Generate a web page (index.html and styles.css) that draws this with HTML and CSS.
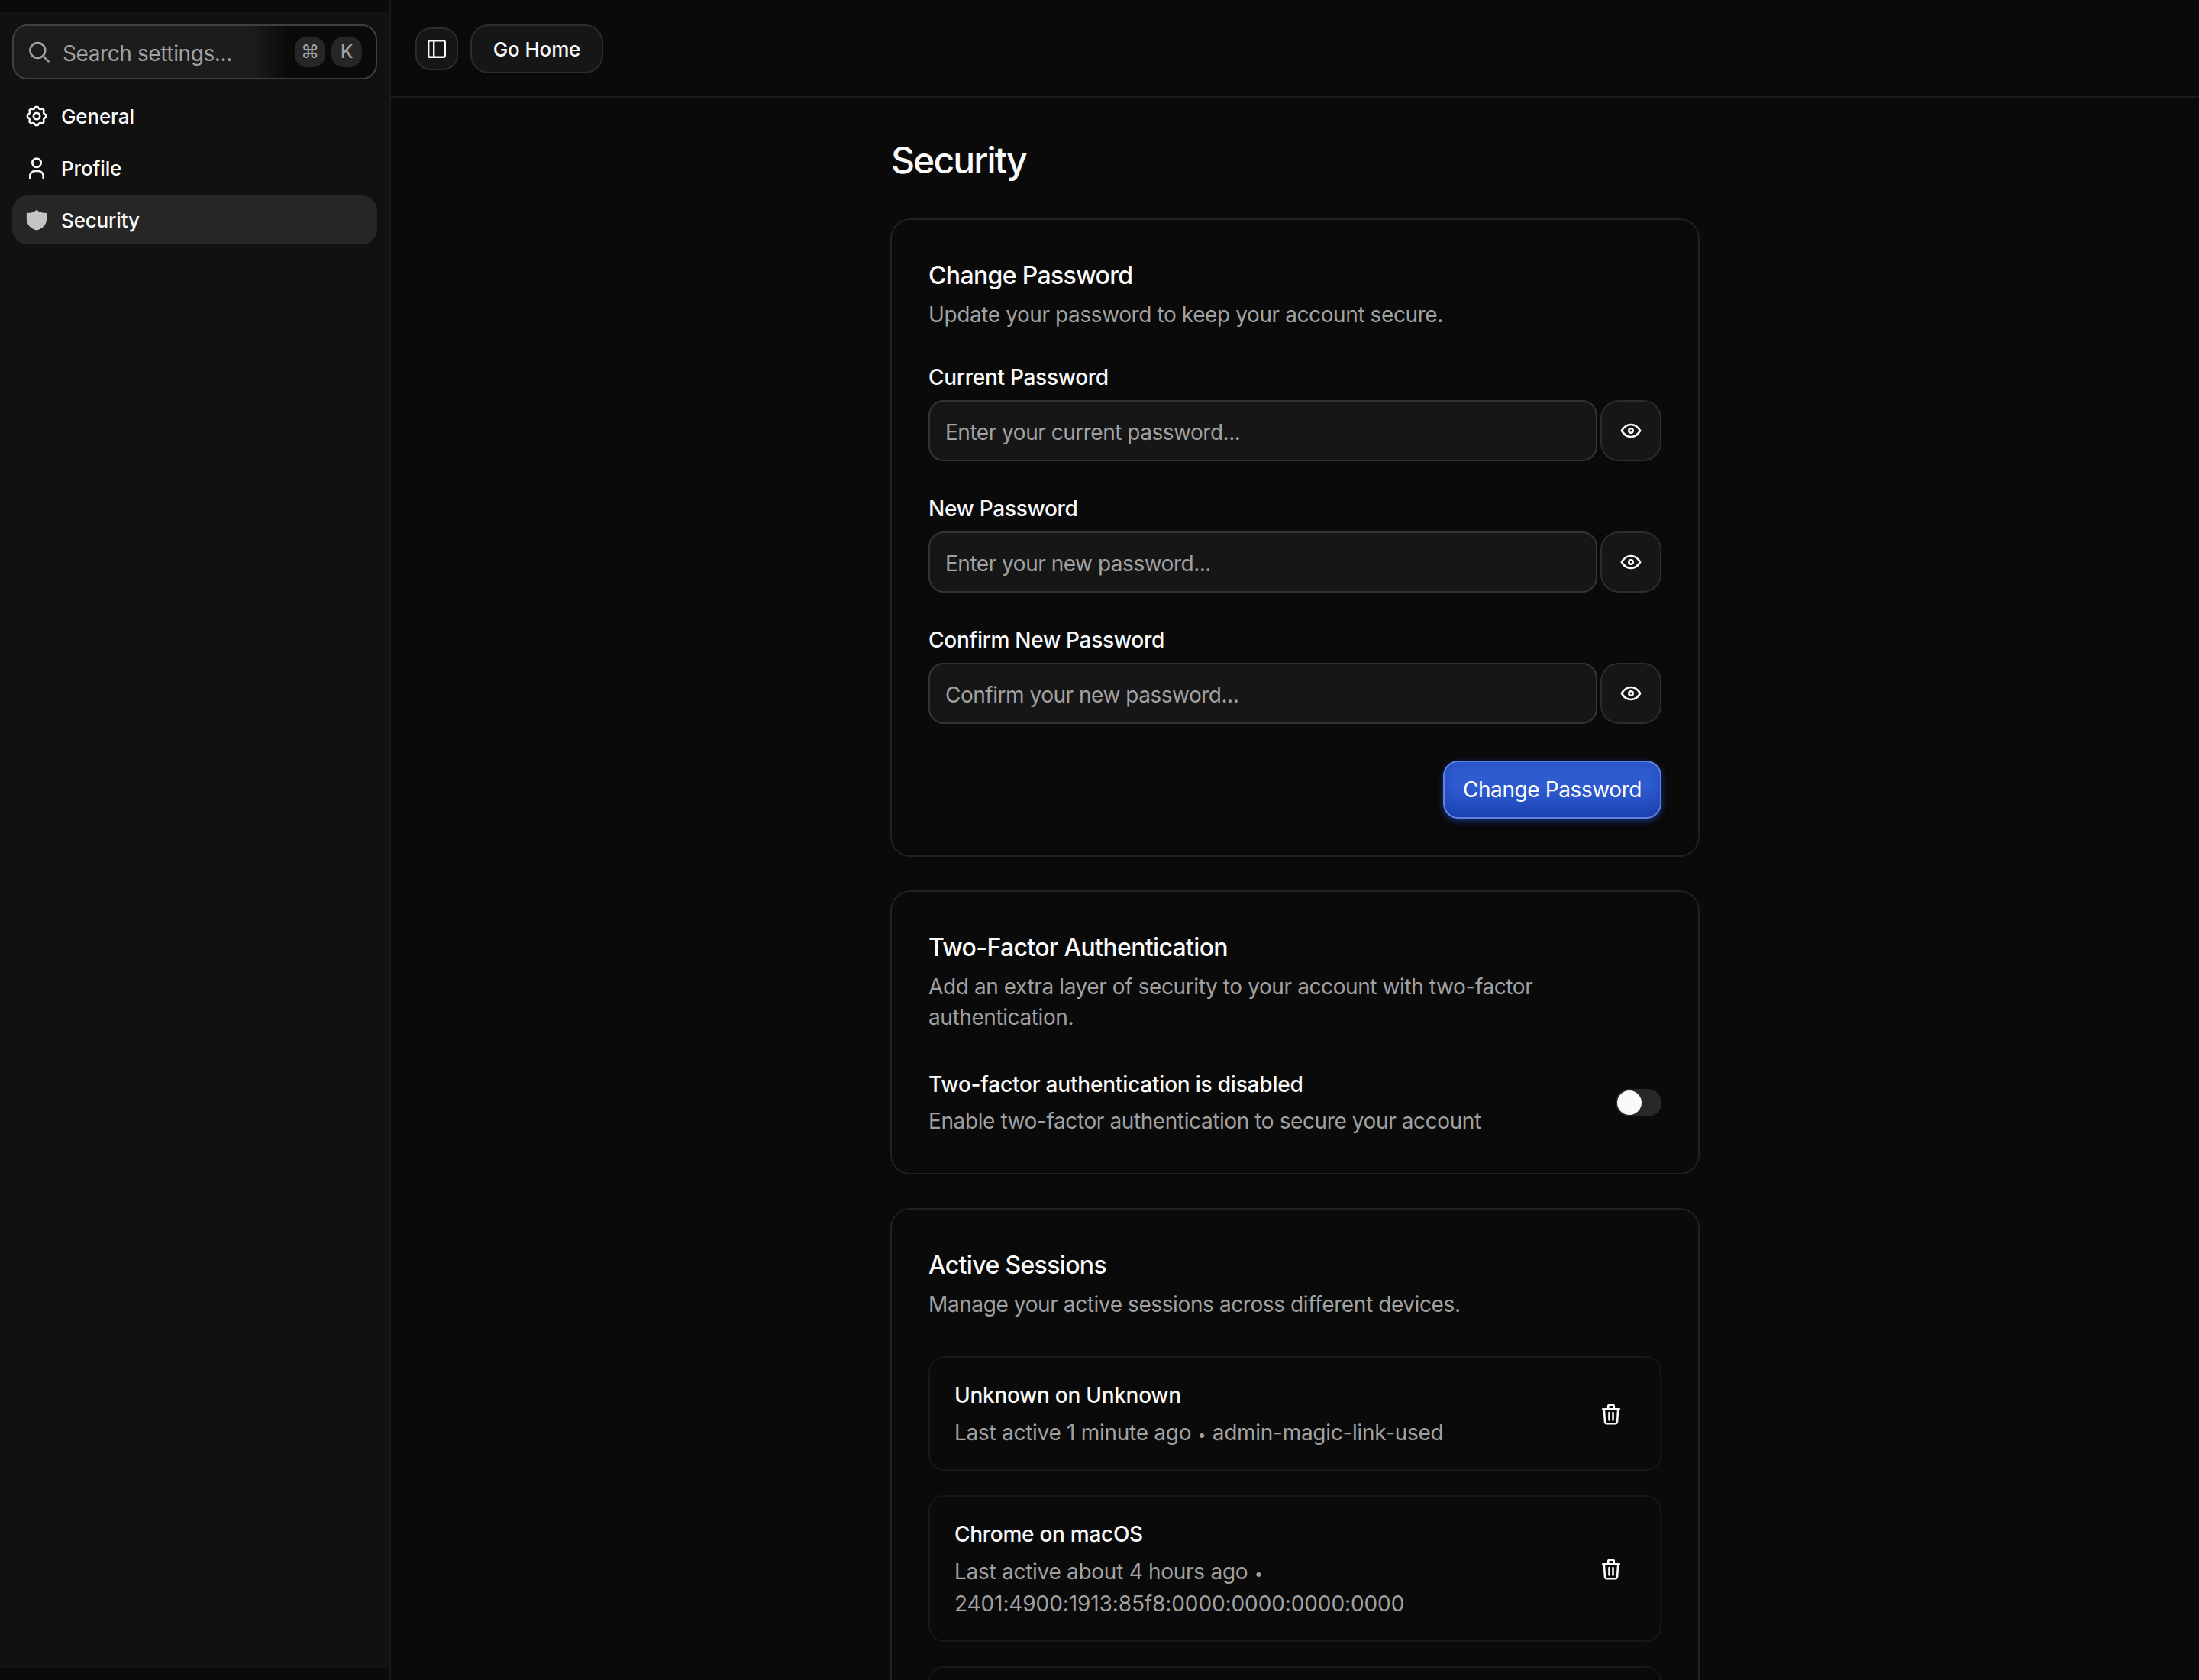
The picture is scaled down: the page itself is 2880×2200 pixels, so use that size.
FILE: index.html
```html
<!DOCTYPE html>
<html lang="en">
<head>
    <meta charset="UTF-8">
    <meta name="viewport" content="width=device-width, initial-scale=1.0">
    <title>Security</title>
    <link rel="stylesheet" href="styles.css">
</head>
<body>
    <!-- shared icons -->
    <svg class="sprite" aria-hidden="true">
        <symbol id="icon-eye" viewBox="0 0 28 28">
            <path d="M1.9 14C5 8.5 9.2 6 14 6s9 2.5 12.1 8C23 19.5 18.800 22 14 22S5 19.5 1.9 14Z"/>
            <circle cx="14" cy="14" r="2.7"/>
        </symbol>
        <symbol id="icon-trash" viewBox="0 0 24 28">
            <path d="M1.200 7.300h21.600M8.200 7V3.800a2 2 0 0 1 2-2h3.600a2 2 0 0 1 2 2V7M2.800 7.600 4 24a2.400 2.400 0 0 0 2.400 2.200h11.200A2.400 2.400 0 0 0 20 24l1.200-16.400M9.500 12v9.500M14.500 12v9.500"/>
        </symbol>
    </svg>

    <div class="layout">
        <aside class="sidebar">
            <div class="sidebar-inner">
                <div class="search">
                    <svg class="icon search-icon" viewBox="0 0 28 28"><circle cx="12.300" cy="12" r="9.900"/><path d="m19.500 19.300 7 7"/></svg>
                    <input type="text" placeholder="Search settings...">
                    <div class="shortcut">
                        <kbd>⌘</kbd>
                        <kbd>K</kbd>
                    </div>
                </div>
                <nav class="nav">
                    <a class="nav-item">
                        <svg class="icon" viewBox="-14 -14 28 28"><path d="M-1.670-11.880Q0-12.400 1.670-11.880 3.250-7.850 7.220-9.580 8.800-8.800 9.580-7.220 7.850-3.250 11.880-1.670 12.400 0 11.880 1.670 7.850 3.250 9.580 7.220 8.800 8.800 7.220 9.580 3.250 7.850 1.670 11.880 0 12.400-1.670 11.880-3.250 7.850-7.220 9.580-8.800 8.800-9.580 7.220-7.850 3.250-11.880 1.670-12.400 0-11.880-1.670-7.850-3.250-9.580-7.220-8.800-8.800-7.220-9.580-3.250-7.850-1.670-11.880Z"/><circle r="4.200"/></svg>
                        <span>General</span>
                    </a>
                    <a class="nav-item">
                        <svg class="icon" viewBox="0 0 28 28"><circle cx="14" cy="7.300" r="5.700"/><path d="M5.300 27.300V24.500A6.500 6.500 0 0 1 11.800 18h4.400a6.500 6.500 0 0 1 6.500 6.500v2.800"/></svg>
                        <span>Profile</span>
                    </a>
                    <a class="nav-item active">
                        <svg class="icon icon-solid" viewBox="0 0 28 28"><path d="M14 .7C10.500 3.800 6.500 4.800 2.300 4.800 1.300 4.800.8 5.400.8 6.400V12c0 8.500 5.700 13.800 13.200 15.400C21.500 25.800 27.200 20.500 27.200 12V6.400c0-1-.5-1.600-1.500-1.600C21.500 4.800 17.500 3.800 14 .7Z"/></svg>
                        <span>Security</span>
                    </a>
                </nav>
            </div>
        </aside>

        <div class="page">
            <header class="topbar">
                <button class="btn btn-toggle" aria-label="Toggle sidebar">
                    <svg class="icon-panel" viewBox="0 0 24 24"><rect x="1.200" y="1.200" width="21.600" height="21.600" rx="2.400"/><path d="M8.200 1.500v21"/></svg>
                </button>
                <button class="btn btn-home">Go Home</button>
            </header>

            <main class="content">
                <h1>Security</h1>

                <section class="card">
                    <div class="card-header">
                        <h2>Change Password</h2>
                        <p>Update your password to keep your account secure.</p>
                    </div>
                    <form class="form">
                        <div class="field">
                            <label for="currentPassword">Current Password</label>
                            <div class="field-row">
                                <input type="password" id="currentPassword" placeholder="Enter your current password...">
                                <button type="button" class="btn btn-eye" aria-label="Show password"><svg class="icon"><use href="#icon-eye"/></svg></button>
                            </div>
                        </div>
                        <div class="field">
                            <label for="newPassword">New Password</label>
                            <div class="field-row">
                                <input type="password" id="newPassword" placeholder="Enter your new password...">
                                <button type="button" class="btn btn-eye" aria-label="Show password"><svg class="icon"><use href="#icon-eye"/></svg></button>
                            </div>
                        </div>
                        <div class="field">
                            <label for="confirmPassword">Confirm New Password</label>
                            <div class="field-row">
                                <input type="password" id="confirmPassword" placeholder="Confirm your new password...">
                                <button type="button" class="btn btn-eye" aria-label="Show password"><svg class="icon"><use href="#icon-eye"/></svg></button>
                            </div>
                        </div>
                        <button type="submit" class="btn-primary">Change Password</button>
                    </form>
                </section>

                <section class="card">
                    <div class="card-header">
                        <h2>Two-Factor Authentication</h2>
                        <p>Add an extra layer of security to your account with two-factor<br>authentication.</p>
                    </div>
                    <div class="setting">
                        <div class="setting-text">
                            <h3>Two-factor authentication is disabled</h3>
                            <p>Enable two-factor authentication to secure your account</p>
                        </div>
                        <button class="switch" role="switch" aria-checked="false" aria-label="Two-factor authentication"><span></span></button>
                    </div>
                </section>

                <section class="card">
                    <div class="card-header">
                        <h2>Active Sessions</h2>
                        <p>Manage your active sessions across different devices.</p>
                    </div>
                    <div class="sessions">
                        <div class="session">
                            <div class="session-text">
                                <h3>Unknown on Unknown</h3>
                                <p>Last active 1 minute ago <span class="dot">•</span> admin-magic-link-used</p>
                            </div>
                            <button class="btn-trash" aria-label="Revoke session"><svg class="icon icon-trash"><use href="#icon-trash"/></svg></button>
                        </div>
                        <div class="session">
                            <div class="session-text">
                                <h3>Chrome on macOS</h3>
                                <p>Last active about 4 hours ago <span class="dot">•</span><br><span class="ip">2401:4900:1913:85f8:0000:0000:0000:0000</span></p>
                            </div>
                            <button class="btn-trash" aria-label="Revoke session"><svg class="icon icon-trash"><use href="#icon-trash"/></svg></button>
                        </div>
                        <div class="session session-next"></div>
                    </div>
                </section>
            </main>
        </div>
    </div>
</body>
</html>
```
FILE: styles.css
```css
* {
    box-sizing: border-box;
    margin: 0;
    padding: 0;
}
body {
    height: 2200px;
    overflow: hidden;
    background-color: #0a0a0a;
    color: #fafafa;
    font-family: Inter, sans-serif;
    font-size: 28px;
    line-height: 40px;
    letter-spacing: -0.4px;
}
button, input {
    font: inherit;
    color: inherit;
    letter-spacing: inherit;
}
h1, h2, h3, label {
    font-weight: 500;
}
h3, label {
    letter-spacing: -0.28px;
}
p {
    color: #a1a1a1;
}
.sprite {
    display: none;
}
.icon {
    display: block;
    width: 28px;
    height: 28px;
    flex: none;
    fill: none;
    stroke: currentColor;
    stroke-width: 2.6;
    stroke-linecap: round;
    stroke-linejoin: round;
}
.layout {
    display: flex;
    height: 2200px;
    overflow: hidden;
}

/* Sidebar */
.sidebar {
    width: 512px;
    flex: none;
    padding: 16px 0;
    border-right: 2px solid #181818;
}
.sidebar-inner {
    height: 100%;
    padding: 16px;
    background-color: #111;
}
.search {
    display: flex;
    align-items: center;
    height: 72px;
    padding-left: 19px;
    border: 2px solid #404040;
    border-radius: 20px;
    background-color: #1c1c1c;
    overflow: hidden;
    color: #a1a1a1;
}
.search input {
    flex: 1;
    min-width: 0;
    height: 68px;
    padding: 3px 0 0 17px;
    border: none;
    background: none;
    outline: none;
}
::placeholder {
    color: #a1a1a1;
    opacity: 1;
}
.shortcut {
    display: flex;
    align-items: center;
    gap: 8px;
    height: 68px;
    padding: 0 18px 0 56px;
    background: linear-gradient(to right, rgba(10, 10, 10, 0), #0a0a0a 48px);
}
kbd {
    display: flex;
    align-items: center;
    justify-content: center;
    width: 40px;
    height: 40px;
    border-radius: 16px;
    background-color: #262626;
    font-family: Inter, sans-serif;
    font-size: 24px;
    font-weight: 500;
}
.nav {
    display: flex;
    flex-direction: column;
    gap: 4px;
    margin-top: 16px;
}
.nav-item {
    display: flex;
    align-items: center;
    gap: 18px;
    height: 64px;
    padding-left: 18px;
    border-radius: 20px;
    font-size: 26px;
    font-weight: 500;
    letter-spacing: -0.15px;
}
.nav-item span {
    padding-top: 2px;
}
.nav-item.active {
    background-color: #262626;
}
.icon-solid {
    fill: #c4c4c4;
    stroke: none;
}

/* Top bar */
.page {
    flex: 1;
}
.topbar {
    display: flex;
    align-items: center;
    gap: 16px;
    height: 128px;
    padding: 2px 32px 0;
    border-bottom: 2px solid #1a1a1a;
}
.btn {
    display: flex;
    align-items: center;
    justify-content: center;
    border: 2px solid #2c2c2c;
    border-radius: 24px;
    background-color: #161616;
}
.btn-toggle {
    width: 56px;
    height: 56px;
    border-radius: 20px;
}
.icon-panel {
    width: 24px;
    height: 24px;
    fill: none;
    stroke: currentColor;
    stroke-width: 2.4;
}
.btn-home {
    width: 174px;
    height: 64px;
    padding-top: 1px;
    font-size: 26px;
    font-weight: 500;
    letter-spacing: -0.15px;
}

/* Content */
.content {
    width: 1060px;
    margin: 0 auto;
    padding-top: 50px;
}
h1 {
    margin-bottom: 44px;
    padding-left: 1px;
    font-size: 48px;
    line-height: 64px;
    letter-spacing: -1.9px;
}
.card {
    margin-bottom: 44px;
    padding: 48px;
    border: 2px solid #202020;
    border-radius: 26px;
}
.card-header {
    margin-bottom: 48px;
}
.card-header h2 {
    margin-bottom: 7px;
    padding-top: 1px;
    font-size: 32px;
    line-height: 48px;
    letter-spacing: -0.65px;
}
.form {
    display: flex;
    flex-direction: column;
    gap: 48px;
}
.field label {
    display: block;
    margin-bottom: 16px;
    line-height: 28px;
}
.field-row {
    display: flex;
    gap: 4px;
}
.field-row input {
    flex: 1;
    height: 80px;
    padding: 4px 20px 0;
    border: 2px solid #343434;
    border-radius: 20px;
    background-color: #161616;
    letter-spacing: -0.48px;
    outline: none;
}
.btn-eye {
    width: 80px;
    height: 80px;
}
.btn-primary {
    align-self: flex-end;
    width: 286px;
    height: 76px;
    border: 2px solid #5f82e0;
    border-radius: 20px;
    background: linear-gradient(to bottom, #2e5bd0 45%, #2450c2 75%, #1d43b4);
    box-shadow: inset 0 0 16px rgba(20, 50, 150, 0.35), 0 3px 8px rgba(37, 84, 215, 0.55);
    color: #fff;
    font-weight: 400;
}
.setting {
    display: flex;
    align-items: center;
    justify-content: space-between;
}
.setting-text h3 {
    margin-bottom: 8px;
    font-size: 28px;
    letter-spacing: -0.2px;
}
.switch {
    display: flex;
    width: 60px;
    height: 36px;
    padding: 2px;
    border: none;
    border-radius: 18px;
    background-color: #282828;
}
.switch span {
    width: 32px;
    height: 32px;
    border-radius: 50%;
    background-color: #fafafa;
}
.sessions {
    display: flex;
    flex-direction: column;
    gap: 32px;
}
.session {
    display: flex;
    align-items: center;
    justify-content: space-between;
    padding: 29px 32px 27px;
    border: 2px solid #171717;
    border-radius: 20px;
}
.session h3 {
    margin-bottom: 8px;
    font-size: 28px;
}
.session p {
    line-height: 42px;
    letter-spacing: -0.28px;
}
.dot {
    padding: 0 1px;
    font-size: 19px;
    line-height: 1;
}
.ip {
    letter-spacing: -0.1px;
}
.session-next {
    height: 150px;
}
.btn-trash {
    display: flex;
    align-items: center;
    justify-content: center;
    width: 64px;
    height: 64px;
    border: none;
    background: none;
}
.icon-trash {
    width: 24px;
}
```
